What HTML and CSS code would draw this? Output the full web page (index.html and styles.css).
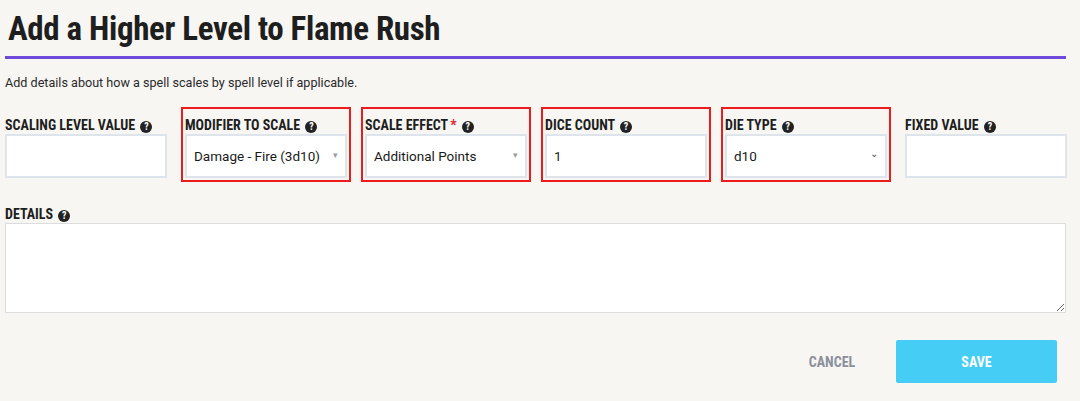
FILE: index.html
```html
<html>
<head>
	<title>Add a Higher Level to Flame Rush</title>
	<meta name="viewport" content="initial-scale=1, maximum-scale=1">
	<link rel="stylesheet" href="styles.css">
</head>
<body>
	<h1 class="title">Add a Higher Level to Flame Rush</h1>
	<p class="intro">Add details about how a spell scales by spell level if applicable.</p>

	<section class="fields">
		<div class="field">
			<label>Scaling Level Value <span class="help">?</span></label>
			<input type="text" class="box">
		</div>
		<div class="field marked">
			<label>Modifier to Scale <span class="help">?</span></label>
			<div class="box select">Damage - Fire (3d10)<span class="arrow">&#9662;</span></div>
		</div>
		<div class="field marked">
			<label>Scale Effect<span class="req">*</span> <span class="help">?</span></label>
			<div class="box select">Additional Points<span class="arrow">&#9662;</span></div>
		</div>
		<div class="field marked">
			<label>Dice Count <span class="help">?</span></label>
			<input type="text" class="box" value="1">
		</div>
		<div class="field marked">
			<label>Die Type <span class="help">?</span></label>
			<div class="box select">d10<span class="arrow chevron">&#8964;</span></div>
		</div>
		<div class="field">
			<label>Fixed Value <span class="help">?</span></label>
			<input type="text" class="box">
		</div>
	</section>

	<section class="details">
		<label>Details <span class="help">?</span></label>
		<textarea class="box"></textarea>
	</section>

	<div class="actions">
		<button class="cancel">Cancel</button>
		<button class="save">Save</button>
	</div>
</body>
</html>
```

FILE: styles.css
```css
body {
	margin: 0;
	padding: 0 14px 0 5px;
	background-color: #f7f6f3;
	font-family: Roboto, "Noto Sans", sans-serif;
	color: #222;
}
.title {
	margin: 0;
	padding: 9px 0 0 3px;
	height: 59px;
	box-sizing: border-box;
	font-family: "Roboto Condensed", "Liberation Sans Narrow", Roboto, sans-serif;
	font-stretch: condensed;
	font-size: 33px;
	font-weight: 700;
	letter-spacing: -0.35px;
	line-height: 40px;
	color: #1e1e1e;
	border-bottom: 3px solid #6f4bdb;
}
.intro {
	margin: 16px 0 0 0;
	font-size: 12.6px;
	line-height: 16px;
	color: #2a2a2a;
}
.fields {
	display: grid;
	grid-template-columns: repeat(6, 162px);
	column-gap: 18px;
	margin-top: 20px;
}
.field.marked {
	outline: 2px solid #ec1c1c;
	outline-offset: 2px;
}
label {
	display: block;
	height: 23px;
	line-height: 28px;
	font-family: "Roboto Condensed", "Liberation Sans Narrow", Roboto, sans-serif;
	font-stretch: condensed;
	font-size: 14px;
	font-weight: 700;
	text-transform: uppercase;
	color: #1e1e1e;
	white-space: nowrap;
}
.req {
	color: #e0232f;
	margin-left: 2px;
}
.help {
	display: inline-block;
	width: 12px;
	height: 12px;
	border-radius: 50%;
	background-color: #222;
	color: #fff;
	font-family: Roboto, sans-serif;
	font-size: 10px;
	font-weight: 700;
	line-height: 12px;
	text-align: center;
	vertical-align: 0px;
	margin-left: 2px;
}
.box {
	display: block;
	width: 100%;
	height: 44px;
	box-sizing: border-box;
	margin: 0;
	padding: 0 7px;
	border: 2px solid #dde4ec;
	background-color: #fff;
	font-family: Roboto, sans-serif;
	font-size: 13.5px;
	color: #1a1a1a;
	outline: none;
}
.select {
	position: relative;
	line-height: 40px;
}
.arrow {
	position: absolute;
	right: 7px;
	top: 0;
	font-size: 9px;
	color: #9a9a9a;
	line-height: 38px;
}
.arrow.chevron {
	font-size: 10px;
	color: #555;
	line-height: 36px;
}
.details {
	margin-top: 25px;
}
.details label {
	height: 20px;
	line-height: 22px;
}
.details textarea {
	height: 90px;
	resize: vertical;
	border-width: 1px;
	border-color: #dcdcdc;
}
.actions {
	display: flex;
	justify-content: flex-end;
	align-items: center;
	margin-top: 27px;
	padding-right: 9px;
}
button {
	border: none;
	font-family: "Roboto Condensed", "Liberation Sans Narrow", Roboto, sans-serif;
	font-stretch: condensed;
	font-size: 14px;
	font-weight: 700;
	text-transform: uppercase;
	cursor: pointer;
}
.cancel {
	background: none;
	color: #8b909b;
	margin-right: 40px;
	padding: 0;
	width: 48px;
}
.save {
	width: 161px;
	height: 43px;
	border-radius: 2px;
	background-color: #46cdf5;
	color: #fff;
}
```
